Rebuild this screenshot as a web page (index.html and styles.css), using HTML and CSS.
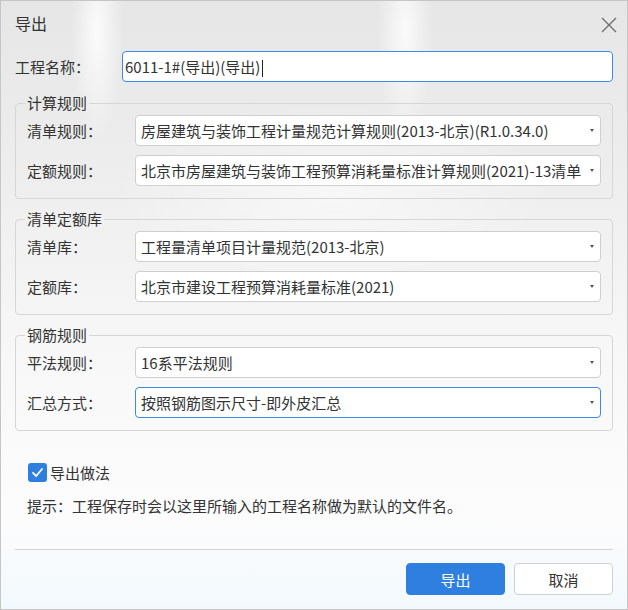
FILE: index.html
```html
<!DOCTYPE html>
<html lang="zh-CN">
<head>
    <meta charset="UTF-8">
    <title>导出</title>
    <link rel="stylesheet" href="styles.css">
</head>
<body>
    <div class="dialog">
        <div class="titlebar">
            <span class="title">导出</span>
            <button class="close" aria-label="关闭">
                <svg width="16" height="16" viewBox="0 0 16 16"><path d="M1 1 L15 15 M15 1 L1 15" stroke="#6f6f6f" stroke-width="1.4" fill="none"/></svg>
            </button>
        </div>

        <div class="name-row">
            <span class="name-label">工程名称：</span>
            <div class="textbox focus">6011-1#(导出)(导出)<span class="caret"></span></div>
        </div>

        <fieldset class="group">
            <legend>计算规则</legend>
            <div class="row">
                <span class="label">清单规则：</span>
                <div class="combo"><span class="combo-text">房屋建筑与装饰工程计量规范计算规则(2013-北京)(R1.0.34.0)</span><i class="arrow"></i></div>
            </div>
            <div class="row">
                <span class="label">定额规则：</span>
                <div class="combo"><span class="combo-text">北京市房屋建筑与装饰工程预算消耗量标准计算规则(2021)-13清单</span><i class="arrow"></i></div>
            </div>
        </fieldset>

        <fieldset class="group">
            <legend>清单定额库</legend>
            <div class="row">
                <span class="label">清单库：</span>
                <div class="combo"><span class="combo-text">工程量清单项目计量规范(2013-北京)</span><i class="arrow"></i></div>
            </div>
            <div class="row">
                <span class="label">定额库：</span>
                <div class="combo"><span class="combo-text">北京市建设工程预算消耗量标准(2021)</span><i class="arrow"></i></div>
            </div>
        </fieldset>

        <fieldset class="group">
            <legend>钢筋规则</legend>
            <div class="row">
                <span class="label">平法规则：</span>
                <div class="combo"><span class="combo-text">16系平法规则</span><i class="arrow"></i></div>
            </div>
            <div class="row">
                <span class="label">汇总方式：</span>
                <div class="combo focus"><span class="combo-text">按照钢筋图示尺寸-即外皮汇总</span><i class="arrow"></i></div>
            </div>
        </fieldset>

        <label class="check">
            <span class="check-box">
                <svg width="13" height="13" viewBox="0 0 13 13"><path d="M2 6.8 L5.2 10 L11 3" stroke="#fff" stroke-width="1.8" fill="none" stroke-linecap="round" stroke-linejoin="round"/></svg>
            </span>
            导出做法
        </label>

        <p class="hint">提示：工程保存时会以这里所输入的工程名称做为默认的文件名。</p>

        <div class="separator"></div>

        <div class="footer">
            <button class="btn primary">导出</button>
            <button class="btn">取消</button>
        </div>
    </div>
</body>
</html>
```

FILE: styles.css
```css
:root {
    --text: #333333;
    --border: #cfcfcf;
    --group-border: #d6d6d6;
    --blue: #2e7fe0;
    --focus: #3c8ae6;
}
* { box-sizing: border-box; }
body { margin: 0; font-family: "Noto Sans CJK SC", "Noto Sans", sans-serif; font-size: 15px; color: var(--text); }

.dialog {
    width: 628px; height: 610px; padding: 0 14px;
    border: 1px solid #c6c6c6;
    background:
        radial-gradient(ellipse 26px 110px at 96px 30px, rgba(255,255,255,0.85), rgba(255,255,255,0)),
        radial-gradient(ellipse 28px 110px at 404px 30px, rgba(255,255,255,0.8), rgba(255,255,255,0)),
        radial-gradient(ellipse 220px 90px at 330px 190px, rgba(255,255,255,0.55), rgba(255,255,255,0)),
        linear-gradient(180deg, #e6e6e6 0%, #eeeeee 30%, #f8f8f8 60%, #fcfcfc 85%, #f2f9fd 100%);
}

/* title bar */
.titlebar { height: 50px; display: flex; justify-content: space-between; align-items: flex-start; padding-top: 11px; }
.title { font-size: 16px; line-height: 22px; }
.close { border: none; background: none; padding: 0; margin: 5px -4px 0 0; width: 16px; height: 16px; cursor: pointer; }
.close svg { display: block; }

/* name row */
.name-row { display: flex; align-items: center; height: 31px; }
.name-label { width: 107px; }
.textbox { flex: 1; height: 31px; line-height: 29px; padding: 0 2px; background: #fff; border: 1px solid var(--border); border-radius: 4px; white-space: nowrap; }
.textbox.focus, .combo.focus { border-color: var(--focus); }
.caret { display: inline-block; width: 1px; height: 17px; background: #222; vertical-align: middle; margin-left: 2px; }

/* groups */
.group { margin: 10px 0 0; padding: 2px 11px 12px; border: 1px solid var(--group-border); border-radius: 4px; }
.group:first-of-type { margin-top: 11px; }
.group legend { padding: 0 2px; margin-left: -2px; line-height: 20px; }
.row { display: flex; align-items: center; }
.row + .row { margin-top: 9px; }
.label { width: 108px; flex-shrink: 0; }
.combo { flex: 1; min-width: 0; height: 31px; display: flex; align-items: center; padding: 0 6px 0 5px; background: #fff; border: 1px solid var(--border); border-radius: 4px; }
.combo-text { flex: 1; min-width: 0; overflow: hidden; white-space: nowrap; }
.arrow { flex-shrink: 0; margin-left: 1px; width: 0; height: 0; border-left: 2.5px solid transparent; border-right: 2.5px solid transparent; border-top: 3px solid #555; }

/* checkbox + hint */
.check { display: flex; align-items: center; margin: 32px 0 0 13px; height: 19px; cursor: pointer; }
.check-box { width: 19px; height: 19px; margin-right: 3px; border-radius: 3px; background: var(--blue); display: flex; align-items: center; justify-content: center; }
.hint { margin: 13px 0 0 12px; line-height: 22px; }

.separator { height: 1px; background: #d4d4d4; margin-top: 32px; }

/* footer */
.footer { display: flex; justify-content: flex-end; gap: 9px; margin-top: 13px; }
.btn { width: 99px; height: 32px; font: inherit; color: var(--text); background: #fff; border: 1px solid var(--border); border-radius: 4px; cursor: pointer; }
.btn.primary { background: var(--blue); border-color: var(--blue); color: #fff; }
```
